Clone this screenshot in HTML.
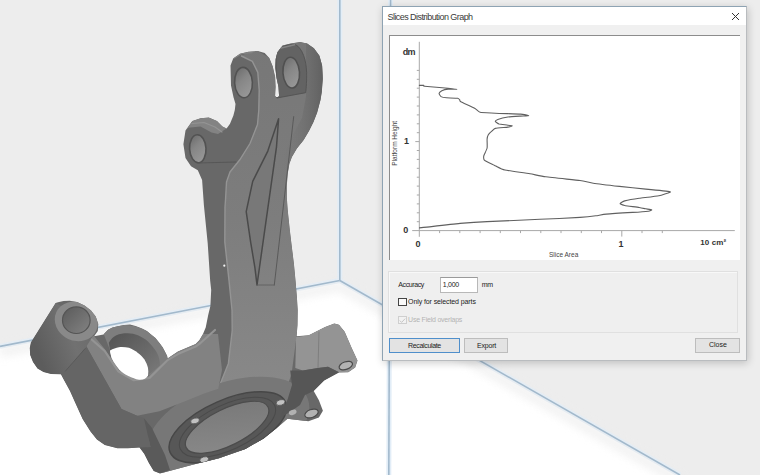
<!DOCTYPE html>
<html><head><meta charset="utf-8">
<style>
html,body{margin:0;padding:0;}
body{width:760px;height:475px;overflow:hidden;position:relative;background:#ededed;font-family:"Liberation Sans",sans-serif;}
#scene,#graph{position:absolute;left:0;top:0;}
.dlg{position:absolute;left:382px;top:6px;width:363px;height:353px;background:#f0f0f0;border:1px solid #8ea3b3;border-right-color:#b9bcbf;border-bottom-color:#b9bcbf;box-shadow:1px 2px 8px rgba(0,0,0,0.2);}
.title{position:absolute;left:0;top:0;width:363px;height:18px;background:#fff;}
.xbtn{position:absolute;left:347px;top:4px;width:11px;height:11px;}
.panel{position:absolute;left:6px;top:28px;width:350px;height:224px;background:#fff;border-top:1px solid #8c8c8c;border-left:1px solid #8c8c8c;}
.grp{position:absolute;left:5px;top:263.5px;width:348px;height:60.5px;border:1px solid #e0e0e0;background:#efefef;box-shadow:inset 1px 1px 0 #f8f8f8;}
.t{position:absolute;font-size:7px;color:#222;white-space:nowrap;line-height:1;}
.b{font-weight:bold;color:#333;}
.btn{position:absolute;top:331px;height:13px;background:#e3e3e3;border:1px solid #bdbdbd;}
</style></head><body>
<svg id="scene" width="760" height="475" viewBox="0 0 760 475">
  <defs><filter id="blur4" x="-10%" y="-50%" width="120%" height="200%"><feGaussianBlur stdDeviation="4"/></filter><linearGradient id="fl1" x1="0" y1="0" x2="0" y2="1"><stop offset="0" stop-color="#eeeeee"/><stop offset="1" stop-color="#ffffff"/></linearGradient></defs>
  <polygon points="0,346.4 339.8,280.5 680,475 0,475" fill="#ffffff"/>
  <g fill="none" stroke-linecap="butt">
    <g stroke="#e2edf7" stroke-width="5">
      <line x1="339.8" y1="0" x2="339.8" y2="280.5"/>
      <line x1="0" y1="346.4" x2="339.8" y2="280.5"/>
      <line x1="339.8" y1="280.5" x2="680" y2="475"/>
      <line x1="390.6" y1="0" x2="388.8" y2="475"/>
    </g>
    <g stroke="#ececec" stroke-width="10" opacity="0.7" filter="url(#blur4)">
      <line x1="0" y1="352" x2="339.8" y2="286"/>
      <line x1="339.8" y1="286" x2="680" y2="481"/>
    </g>
    <g stroke="#a2b9cc" stroke-width="1.6">
      <line x1="339.8" y1="0" x2="339.8" y2="280.5"/>
      <line x1="0" y1="346.4" x2="339.8" y2="280.5"/>
      <line x1="339.8" y1="280.5" x2="680" y2="475"/>
      <line x1="390.6" y1="0" x2="388.8" y2="475"/>
    </g>
  </g>
  <g id="model"><defs><clipPath id="cp"><polygon points="230.5,65.4 233.2,58.5 240.0,53.7 248.3,51.7 257.8,51.0 264.7,53.0 269.3,58.1 272.7,66.2 275.1,76.7 275.6,87.1 275.1,96.0 276.8,97.5 279.1,96.3 278.5,87.1 276.8,79.0 275.1,67.4 275.6,59.3 277.4,52.3 282.5,45.5 290.7,43.5 300.2,42.1 307.1,43.5 313.9,48.3 319.4,55.8 322.1,65.4 322.8,79.0 321.8,92.0 320.5,100.0 317.2,112.6 313.5,122.0 309.0,131.0 303.7,140.1 296.9,148.5 291.9,156.9 289.4,163.7 287.7,173.8 286.8,185.6 286.8,197.3 287.7,210.0 289.8,230.0 291.8,246.8 293.9,263.7 295.5,280.5 296.9,297.3 297.7,310.0 297.5,325.0 296.6,336.3 308.8,335.2 325.1,327.1 334.3,323.6 339.0,324.7 344.7,331.7 351.7,347.9 357.5,360.6 355.2,367.6 348.2,372.2 339.0,372.6 324.2,380.5 313.7,391.0 318.9,400.3 322.9,410.8 318.9,417.4 308.4,421.3 297.9,420.0 287.4,418.7 276.8,427.9 263.7,438.4 245.3,448.9 218.9,458.2 192.6,464.7 160.0,473.5 153.7,471.1 149.0,463.2 144.2,453.7 139.5,447.4 128.0,448.3 117.4,448.2 104.8,445.0 96.9,439.5 90.5,431.6 82.6,419.0 74.0,400.0 70.0,391.0 63.3,378.8 61.0,374.3 51.1,374.1 43.5,372.0 37.5,368.6 33.0,362.0 30.2,355.0 29.8,348.0 30.9,342.4 55.6,303.0 58.0,302.2 63.5,301.0 69.7,300.8 77.0,302.0 84.5,305.5 91.0,310.5 95.7,316.5 98.3,324.0 97.8,331.0 94.1,336.3 103.5,334.5 108.0,329.8 112.5,327.5 117.8,326.2 124.0,325.0 130.0,324.5 135.5,326.0 142.0,328.5 147.0,331.0 150.5,333.9 155.5,338.0 159.3,342.8 162.5,347.0 165.7,352.9 167.2,356.0 167.6,358.6 177.9,351.6 195.6,344.0 199.3,340.3 203.0,334.0 205.7,327.6 208.2,315.0 210.4,306.0 211.2,290.0 210.2,281.1 207.7,243.2 203.9,205.3 202.1,180.0 197.8,170.3 191.0,166.2 185.5,158.0 183.4,144.2 185.5,130.5 192.3,121.0 200.5,118.2 208.8,117.5 217.0,121.0 222.5,126.4 226.6,128.5 230.0,123.7 233.4,115.5 234.8,110.0 235.5,104.0 233.5,97.3 231.0,85.5"/></clipPath><linearGradient id="gcyl" x1="0" y1="0.4" x2="1" y2="0"><stop offset="0" stop-color="#5c5c5c"/><stop offset="0.5" stop-color="#717171"/><stop offset="1" stop-color="#686868"/></linearGradient><linearGradient id="ghole" x1="0" y1="0" x2="0.5" y2="1"><stop offset="0" stop-color="#686868"/><stop offset="0.5" stop-color="#868686"/><stop offset="1" stop-color="#969696"/></linearGradient><linearGradient id="gfront" x1="0" y1="0" x2="0" y2="1"><stop offset="0" stop-color="#777777"/><stop offset="0.5" stop-color="#7d7d7d"/><stop offset="1" stop-color="#898989"/></linearGradient><linearGradient id="gright" x1="0" y1="0" x2="1" y2="0"><stop offset="0" stop-color="#7a7a7a" stop-opacity="0"/><stop offset="1" stop-color="#5e5e5e" stop-opacity="1"/></linearGradient><linearGradient id="gbore" x1="1" y1="0" x2="0" y2="1"><stop offset="0" stop-color="#777777"/><stop offset="1" stop-color="#8a8a8a"/></linearGradient><linearGradient id="gring" x1="0" y1="0" x2="1" y2="1"><stop offset="0" stop-color="#535353"/><stop offset="1" stop-color="#7a7a7a"/></linearGradient><linearGradient id="ghole2" x1="0" y1="0" x2="1" y2="1"><stop offset="0" stop-color="#5a5a5a"/><stop offset="1" stop-color="#838383"/></linearGradient></defs>
<polygon points="230.5,65.4 233.2,58.5 240.0,53.7 248.3,51.7 257.8,51.0 264.7,53.0 269.3,58.1 272.7,66.2 275.1,76.7 275.6,87.1 275.1,96.0 276.8,97.5 279.1,96.3 278.5,87.1 276.8,79.0 275.1,67.4 275.6,59.3 277.4,52.3 282.5,45.5 290.7,43.5 300.2,42.1 307.1,43.5 313.9,48.3 319.4,55.8 322.1,65.4 322.8,79.0 321.8,92.0 320.5,100.0 317.2,112.6 313.5,122.0 309.0,131.0 303.7,140.1 296.9,148.5 291.9,156.9 289.4,163.7 287.7,173.8 286.8,185.6 286.8,197.3 287.7,210.0 289.8,230.0 291.8,246.8 293.9,263.7 295.5,280.5 296.9,297.3 297.7,310.0 297.5,325.0 296.6,336.3 308.8,335.2 325.1,327.1 334.3,323.6 339.0,324.7 344.7,331.7 351.7,347.9 357.5,360.6 355.2,367.6 348.2,372.2 339.0,372.6 324.2,380.5 313.7,391.0 318.9,400.3 322.9,410.8 318.9,417.4 308.4,421.3 297.9,420.0 287.4,418.7 276.8,427.9 263.7,438.4 245.3,448.9 218.9,458.2 192.6,464.7 160.0,473.5 153.7,471.1 149.0,463.2 144.2,453.7 139.5,447.4 128.0,448.3 117.4,448.2 104.8,445.0 96.9,439.5 90.5,431.6 82.6,419.0 74.0,400.0 70.0,391.0 63.3,378.8 61.0,374.3 51.1,374.1 43.5,372.0 37.5,368.6 33.0,362.0 30.2,355.0 29.8,348.0 30.9,342.4 55.6,303.0 58.0,302.2 63.5,301.0 69.7,300.8 77.0,302.0 84.5,305.5 91.0,310.5 95.7,316.5 98.3,324.0 97.8,331.0 94.1,336.3 103.5,334.5 108.0,329.8 112.5,327.5 117.8,326.2 124.0,325.0 130.0,324.5 135.5,326.0 142.0,328.5 147.0,331.0 150.5,333.9 155.5,338.0 159.3,342.8 162.5,347.0 165.7,352.9 167.2,356.0 167.6,358.6 177.9,351.6 195.6,344.0 199.3,340.3 203.0,334.0 205.7,327.6 208.2,315.0 210.4,306.0 211.2,290.0 210.2,281.1 207.7,243.2 203.9,205.3 202.1,180.0 197.8,170.3 191.0,166.2 185.5,158.0 183.4,144.2 185.5,130.5 192.3,121.0 200.5,118.2 208.8,117.5 217.0,121.0 222.5,126.4 226.6,128.5 230.0,123.7 233.4,115.5 234.8,110.0 235.5,104.0 233.5,97.3 231.0,85.5" fill="#686868" />
<polygon points="110.1,350.4 118.9,347.2 129.0,347.8 137.9,352.9 144.2,359.2 148.0,368.0 148.0,375.5 139.0,379.8 119.7,370.0 111.8,358.2" fill="#ffffff" />
<g clip-path="url(#cp)">
<polygon points="241.4,56.0 252.4,61.4 257.8,72.4 259.2,90.0 258.8,110.0 257.5,124.5 250.0,143.5 239.8,159.8 230.0,172.0 226.5,182.0 225.5,200.0 225.0,207.0 224.8,241.8 229.0,280.7 232.0,310.0 232.2,330.6 228.4,363.4 218.3,388.7 284.0,396.3 291.6,373.5 296.6,336.0 297.5,325.0 297.7,310.0 296.9,297.3 295.5,280.5 293.9,263.7 291.8,246.8 289.8,230.0 287.7,210.0 286.8,197.3 286.8,185.6 287.7,173.8 289.4,163.7 291.9,156.9 296.9,148.5 303.7,140.1 309.0,131.0 313.5,122.0 317.2,112.6 320.5,100.0 320.5,100.0 321.8,92.0 322.8,79.0 322.1,65.4 319.4,55.8 313.9,48.3 307.1,43.5 300.2,42.1 290.7,43.5 282.5,45.5 277.4,52.3 275.6,59.3 275.1,67.4 276.8,79.0 278.5,87.1 279.1,96.3 276.8,97.5 275.1,96.0 275.6,87.1 275.1,76.7 272.7,66.2 269.3,58.1 257.8,51.0 248.3,51.7" fill="url(#gfront)" />
<polygon points="306.0,40.0 325.0,40.0 322.8,79.0 321.8,92.0 320.5,100.0 317.2,112.6 313.5,122.0 309.0,131.0 303.7,140.1 296.9,148.5 291.9,156.9 289.4,163.7 287.7,173.8 280.0,165.0 290.0,140.0 302.0,118.0 306.0,96.0" fill="url(#gright)" />
<path d="M275.8,53 C278,47.5 287,44 295.5,44.6 C302.5,48.5 306.2,60 306.6,72.2 C306.8,80 306.3,88 305.6,92.7 L276.8,98 Z" fill="#636363" stroke="#555555" stroke-width="1"/>
<polyline points="279.0,48.5 294.6,44.8" fill="none" stroke="#838383" stroke-width="1.5" stroke-linejoin="round" stroke-linecap="round" />
<ellipse cx="291.2" cy="72.6" rx="8.3" ry="15.4" fill="url(#ghole)" transform="rotate(-4 291.2 72.6)" stroke="#505050" stroke-width="1.6"/>
<ellipse cx="243.5" cy="82.6" rx="8.9" ry="15.2" fill="url(#ghole)" transform="rotate(-3 243.5 82.6)" stroke="#525252" stroke-width="1.6"/>
<polyline points="234.0,58.0 241.4,53.5 252.0,52.5" fill="none" stroke="#838383" stroke-width="1.5" stroke-linejoin="round" stroke-linecap="round" />
<polyline points="241.4,56.0 252.4,61.4 257.8,72.4 259.2,90.0 258.8,110.0 257.5,124.5 250.0,143.5 239.8,159.8 230.0,172.0 226.5,182.0 225.5,200.0 225.0,207.0 224.8,241.8 229.0,280.7 232.0,310.0 232.2,330.6 228.4,363.4 218.3,388.7" fill="none" stroke="#949494" stroke-width="1.4" stroke-linejoin="round" stroke-linecap="round" />
<polygon points="185.5,130.5 192.3,121.0 200.5,118.2 208.8,117.5 217.0,121.0 222.5,126.4 226.6,128.5 218.0,134.0 211.5,132.6 200.5,126.4 188.2,127.8" fill="#838383" />
<polyline points="192.0,123.5 204.0,122.5 215.0,127.0 222.0,132.0" fill="none" stroke="#949494" stroke-width="1.2" stroke-linejoin="round" stroke-linecap="round" />
<ellipse cx="197.8" cy="148.7" rx="8.2" ry="14" fill="url(#ghole)" transform="rotate(-3 197.8 148.7)" stroke="#525252" stroke-width="1.6"/>
<polyline points="198.0,163.0 236.0,162.0" fill="none" stroke="#575757" stroke-width="1" stroke-linejoin="round" stroke-linecap="round" />
<polyline points="293.7,116.6 274.3,285.0" fill="none" stroke="#5a5a5a" stroke-width="1" stroke-linejoin="round" stroke-linecap="round" />
<polygon points="278.6,118.7 267.8,151.1 252.7,181.4 246.2,211.6 250.6,241.8 254.9,267.7 257.0,285.0 276.5,146.8" fill="#787878" stroke="#4a4a4a" stroke-width="1.5" stroke-linejoin="round"/>
<polyline points="257.0,285.0 274.3,285.0" fill="none" stroke="#5c5c5c" stroke-width="0.8" stroke-linejoin="round" stroke-linecap="round" />
<ellipse cx="228" cy="428" rx="85" ry="45" fill="#777777" transform="rotate(-20 228 428)" />
<polygon points="84.2,342.6 89.0,336.0 94.0,336.0 104.7,349.0 118.2,369.2 133.8,378.2 149.5,375.9 167.1,357.9 177.9,351.6 195.6,344.0 199.3,340.3 203.0,334.0 218.0,334.0 222.0,370.0 218.3,388.7 204.2,393.4 181.9,402.4 159.5,411.3 137.1,415.8 121.5,409.0" fill="#828282" />
<polyline points="90.0,338.0 104.7,351.0 118.2,371.2 133.8,380.2 149.5,377.9 167.1,360.4 177.9,354.1 195.6,346.5 200.5,343.0 215.0,330.0" fill="none" stroke="#949494" stroke-width="2.2" stroke-linejoin="round" stroke-linecap="round" />
<polygon points="59.4,372.2 84.2,342.6 121.5,409.0 137.1,415.8 143.8,418.0 150.5,447.1 139.5,447.4 128.0,448.3 117.4,448.2 104.8,445.0 96.9,439.5 90.5,431.6 82.6,419.0 74.0,400.0 70.0,391.0 63.3,378.8" fill="#656565" />
<polygon points="143.8,418.0 152.0,428.0 165.0,455.0 170.0,470.0 160.0,473.5 153.7,471.1 149.0,463.2 144.2,453.7 139.5,447.4 150.5,447.1" fill="#5a5a5a" />
<polygon points="30.9,342.4 55.6,303.0 98.3,327.2 85.2,348.5 65.3,371.2 61.0,374.3 51.1,374.1 43.5,372.0 37.5,368.6 33.0,362.0 30.2,355.0 29.8,348.0" fill="url(#gcyl)" />
<polyline points="85.2,348.5 65.3,371.2" fill="none" stroke="#5a5a5a" stroke-width="1" stroke-linejoin="round" stroke-linecap="round" />
<ellipse cx="76.3" cy="321.4" rx="22" ry="19.3" fill="#898989" transform="rotate(25 76.3 321.4)" />
<ellipse cx="76.3" cy="320.2" rx="13.8" ry="13.3" fill="url(#ghole2)" transform="rotate(0 76.3 320.2)" stroke="#555555" stroke-width="1.2"/>
<path d="M103.5,333.5 C107,329.5 110,327.8 112.6,327 C117,325.8 121,325.1 125.3,325.1 C130,325.3 134,326 137.9,327 C143,329 147,331 150.5,333.9 C154,336.5 157,339.5 159.3,342.8 C162,346 164.5,349.5 165.7,352.9 C166.8,355 167.4,357 167.6,358.6 L149.5,375.9 L147.9,374.9 C148.5,365 144,356 136.3,351.7 C130,348 120,347 110.1,350.4 Z" fill="#7e7e7e"/>
<path d="M108.8,342.8 C111,339 113.5,336.5 116.4,335.2 C120,333.8 124,333.2 127.8,333.3 C131.5,333.5 135,334 137.9,335.2 C142,337 145.5,339 148,341.5 C151,344.5 153.5,347.5 155.6,350.4 C157.5,353.5 158.8,356.5 159.3,359.2 C159.8,361.5 160,363.5 160,365.5 L152.6,371.4 L148,375 C148.5,365 144,356 137.9,352.9 C132,349 124,347 110.1,350.4 Z" fill="url(#gring)"/>
<path d="M110.1,350.4 C113,348.8 116,347.6 118.9,347.2 C122.5,346.9 126,347.2 129,347.8 C132,349 135,350.8 137.9,352.9 C140.5,354.8 142.5,357 144.2,359.2 C146,362 147.3,365 148,368 C148.4,370.5 148.4,373 148,375.5 C146.5,378.5 143,380.2 139,379.8 C132,378.5 124,374.5 119.7,370 C116,366 113.5,362 111.8,358.2 C110.8,355.5 110.2,353 110.1,350.4 Z" fill="#ffffff"/>
<ellipse cx="227.9" cy="427.3" rx="63" ry="27.5" fill="#575757" transform="rotate(-23.5 227.9 427.3)" stroke="#474747" stroke-width="1.5"/>
<ellipse cx="227.5" cy="427.3" rx="52" ry="22.5" fill="none" transform="rotate(-25 227.5 427.3)" stroke="#4a4a4a" stroke-width="1"/>
<ellipse cx="227.1" cy="427.3" rx="45.7" ry="18.2" fill="url(#gbore)" transform="rotate(-26.4 227.1 427.3)" stroke="#4c4c4c" stroke-width="1.2"/>
<ellipse cx="195" cy="420.9" rx="4.5" ry="2.8" fill="#c2c2c2" transform="rotate(-15 195 420.9)" stroke="#555555" stroke-width="0.8"/>
<ellipse cx="280.6" cy="402.5" rx="4.5" ry="2.8" fill="#c2c2c2" transform="rotate(-15 280.6 402.5)" stroke="#555555" stroke-width="0.8"/>
<ellipse cx="204.2" cy="459.6" rx="4.5" ry="2.8" fill="#c2c2c2" transform="rotate(-15 204.2 459.6)" stroke="#555555" stroke-width="0.8"/>
<polygon points="296.1,337.0 308.8,335.2 325.1,327.1 334.3,323.6 339.0,324.7 344.7,331.7 351.7,347.9 357.5,360.6 355.2,367.6 348.2,372.2 339.0,372.2 328.0,366.8 318.0,368.1 302.8,370.6 295.3,368.1" fill="#949494" />
<polyline points="319.0,332.0 318.0,368.0" fill="none" stroke="#7e7e7e" stroke-width="1" stroke-linejoin="round" stroke-linecap="round" />
<polygon points="290.2,370.6 302.8,370.6 318.0,368.1 328.0,366.8 339.0,372.2 324.2,380.5 313.7,391.0 305.0,395.0 300.0,405.0 290.0,412.0 280.0,418.0 287.4,400.0 292.0,385.0" fill="#565656" />
<ellipse cx="345.8" cy="365.6" rx="7" ry="3.8" fill="#b3b3b3" transform="rotate(-20 345.8 365.6)" stroke="#4a4a4a" stroke-width="1.2"/>
<ellipse cx="311.5" cy="413.5" rx="7" ry="4" fill="#b2b2b2" transform="rotate(-20 311.5 413.5)" stroke="#4a4a4a" stroke-width="1.2"/>
<ellipse cx="292.7" cy="412.3" rx="4" ry="2.5" fill="#b2b2b2" transform="rotate(-20 292.7 412.3)" />
<circle cx="224.3" cy="265.7" r="1.1" fill="#f4f4f4"/>
</g></g><!--endmodel-->
</svg>
<div class="dlg">
  <div class="title">
    <svg class="xbtn" viewBox="0 0 11 11"><path d="M2 2L9 9M9 2L2 9" stroke="#333" stroke-width="1"/></svg>
  </div>
  <div class="panel"></div>
  <div class="grp"></div>
  <div class="btn" style="left:6px;width:69px;border-color:#4f8fcb;"></div>
  <div class="btn" style="left:81px;width:42px;"></div>
  <div class="btn" style="left:312px;width:43px;"></div>
</div>
<svg id="graph" width="760" height="475" viewBox="0 0 760 475">
  <g stroke="#a8a8a8" stroke-width="1" fill="none">
    <line x1="419.3" y1="41.8" x2="419.3" y2="236.8"/>
    <line x1="412.2" y1="230.6" x2="734.8" y2="230.6"/>
    <line x1="416.8" y1="221.7" x2="419.3" y2="221.7"/><line x1="416.8" y1="212.8" x2="419.3" y2="212.8"/><line x1="416.8" y1="203.9" x2="419.3" y2="203.9"/><line x1="416.8" y1="195.0" x2="419.3" y2="195.0"/><line x1="416.8" y1="186.1" x2="419.3" y2="186.1"/><line x1="416.8" y1="177.2" x2="419.3" y2="177.2"/><line x1="416.8" y1="168.3" x2="419.3" y2="168.3"/><line x1="416.8" y1="159.4" x2="419.3" y2="159.4"/><line x1="416.8" y1="150.5" x2="419.3" y2="150.5"/><line x1="415.3" y1="141.6" x2="419.3" y2="141.6"/><line x1="416.8" y1="132.7" x2="419.3" y2="132.7"/><line x1="416.8" y1="123.8" x2="419.3" y2="123.8"/><line x1="416.8" y1="114.9" x2="419.3" y2="114.9"/><line x1="416.8" y1="106.0" x2="419.3" y2="106.0"/><line x1="416.8" y1="97.1" x2="419.3" y2="97.1"/><line x1="416.8" y1="88.2" x2="419.3" y2="88.2"/><line x1="416.8" y1="79.3" x2="419.3" y2="79.3"/><line x1="416.8" y1="70.4" x2="419.3" y2="70.4"/><line x1="439.6" y1="230.6" x2="439.6" y2="233.1"/><line x1="459.8" y1="230.6" x2="459.8" y2="233.1"/><line x1="480.1" y1="230.6" x2="480.1" y2="233.1"/><line x1="500.3" y1="230.6" x2="500.3" y2="233.1"/><line x1="520.5" y1="230.6" x2="520.5" y2="233.1"/><line x1="540.8" y1="230.6" x2="540.8" y2="233.1"/><line x1="561.0" y1="230.6" x2="561.0" y2="233.1"/><line x1="581.3" y1="230.6" x2="581.3" y2="233.1"/><line x1="601.5" y1="230.6" x2="601.5" y2="233.1"/><line x1="621.8" y1="230.6" x2="621.8" y2="236.6"/><line x1="642.0" y1="230.6" x2="642.0" y2="233.1"/><line x1="662.3" y1="230.6" x2="662.3" y2="233.1"/>
  </g>
  <path d="M418.9,85.4 C419.3,85.4 423.2,85.3 423.7,85.4 C424.2,85.5 422.5,86.0 424.5,86.2 C426.5,86.4 445.4,87.9 448.1,88.2 C450.8,88.5 456.8,89.2 456.8,89.3 C456.8,89.4 449.4,89.0 448.1,89.1 C446.9,89.2 442.6,90.3 441.8,90.7 C441.1,91.1 439.2,92.9 439.1,93.4 C439.0,93.9 440.4,96.2 441.0,96.6 C441.6,97.0 445.2,97.7 446.6,97.8 C448.0,97.9 456.5,98.1 457.6,98.3 C458.7,98.5 459.3,99.4 459.6,99.7 C459.9,100.0 459.5,101.0 460.8,101.7 C462.1,102.4 473.4,107.5 475.0,108.4 C476.6,109.3 478.4,111.9 480.1,112.3 C481.8,112.7 491.9,113.0 495.3,113.2 C498.7,113.4 517.7,113.9 520.5,114.1 C523.3,114.3 528.8,115.5 528.8,115.7 C528.8,115.9 522.2,116.0 520.5,116.1 C518.8,116.2 509.8,116.7 507.9,117.0 C506.0,117.3 498.9,119.1 497.8,119.5 C496.8,119.9 495.2,121.0 495.3,121.4 C495.4,121.8 498.1,123.7 499.1,124.0 C500.2,124.3 506.8,125.0 507.9,125.2 C509.0,125.4 512.3,125.6 512.3,125.8 C512.3,126.0 509.3,126.9 507.9,127.1 C506.5,127.3 496.6,128.1 495.3,128.4 C494.0,128.7 492.7,130.4 492.1,130.9 C491.5,131.4 488.7,134.0 488.3,134.7 C487.9,135.4 487.2,138.0 487.1,139.1 C487.0,140.2 487.4,146.6 487.1,148.0 C486.8,149.4 484.2,154.6 483.9,155.5 C483.6,156.4 483.8,158.9 483.9,159.3 C484.0,159.7 484.5,160.3 485.2,160.7 C485.9,161.1 491.8,164.0 492.7,164.4 C493.6,164.8 495.0,165.6 496.0,166.1 C497.0,166.6 502.1,169.4 504.9,170.0 C507.7,170.6 526.6,173.2 530.0,173.8 C533.4,174.4 541.6,176.2 545.8,176.8 C550.0,177.4 576.0,180.0 580.0,180.5 C584.0,181.0 589.9,182.7 593.2,183.2 C596.5,183.7 615.1,185.9 619.5,186.4 C623.9,186.9 641.6,188.7 645.8,189.1 C650.0,189.5 668.5,191.3 670.1,191.7 C671.7,192.1 666.4,193.4 665.5,193.7 C664.6,194.0 661.1,195.3 658.9,195.7 C656.7,196.1 642.1,197.9 639.2,198.3 C636.4,198.7 626.3,200.5 624.7,200.9 C623.1,201.3 620.1,203.2 620.1,203.6 C620.1,204.0 623.1,205.2 624.7,205.5 C626.3,205.8 637.4,207.2 639.2,207.5 C641.0,207.8 644.8,208.6 645.8,208.8 C646.8,209.0 651.5,209.7 651.7,209.9 C651.9,210.1 650.0,211.0 648.4,211.2 C646.8,211.4 636.1,212.2 632.6,212.4 C629.1,212.6 609.4,213.8 606.3,214.1 C603.2,214.4 598.0,215.5 595.8,215.8 C593.6,216.1 584.6,217.1 580.0,217.4 C575.4,217.7 547.8,219.0 540.0,219.3 C532.2,219.7 493.7,221.3 487.0,221.6 C480.3,221.9 464.7,223.0 460.1,223.4 C455.5,223.8 434.9,226.2 431.5,226.6 C428.1,227.0 420.0,227.8 419.0,227.9" fill="none" stroke="#606060" stroke-width="1.1" stroke-linejoin="round"/>
</svg>
<div style="position:absolute;left:439.5px;top:277px;width:36px;height:14px;background:#fff;border:1px solid #b8b8b8;border-top-color:#9a9a9a;"></div>
<div style="position:absolute;left:398px;top:297.5px;width:6.5px;height:6.5px;background:#fafafa;border:1px solid #444;"></div>
<div style="position:absolute;left:398px;top:315.5px;width:6.5px;height:6.5px;background:#f2f2f2;border:1px solid #cfcfcf;"></div>
<svg style="position:absolute;left:398px;top:315.5px;" width="9" height="9" viewBox="0 0 9 9"><path d="M1.8 4.6L3.6 6.4L7.2 2.6" stroke="#c6c6c6" stroke-width="1" fill="none"/></svg>
<span class="t" id="t_title" style="left:387.5px;top:12.5px;font-size:9px;letter-spacing:-0.56px;color:#3a3a3a;">Slices Distribution Graph</span>
<span class="t b" id="t_dm" style="left:402.8px;top:48.3px;font-size:9px;letter-spacing:-0.9px;">dm</span>
<span class="t b" id="t_y1" style="left:404px;top:136.8px;font-size:9px;">1</span>
<span class="t b" id="t_y0" style="left:403.2px;top:226.2px;font-size:9px;">0</span>
<span class="t b" id="t_x0" style="left:415.5px;top:240.1px;font-size:9px;">0</span>
<span class="t b" id="t_x1" style="left:618.5px;top:240px;font-size:9px;">1</span>
<span class="t b" id="t_x10" style="left:700.3px;top:239px;font-size:8px;letter-spacing:0.1px;">10 cm²</span>
<span class="t" id="t_sa" style="left:549px;top:252px;font-size:6.5px;color:#444;">Slice Area</span>
<span class="t" id="t_ph" style="left:372px;top:140px;font-size:6.5px;color:#444;transform:rotate(-90deg);transform-origin:center;width:47px;text-align:center;">Platform Height</span>
<span class="t" id="t_acc" style="left:398.3px;top:281px;font-size:7px;letter-spacing:-0.4px;">Accuracy</span>
<span class="t" id="t_mm" style="left:481.7px;top:281px;font-size:7px;letter-spacing:-0.2px;">mm</span>
<span class="t" id="t_only" style="left:408.1px;top:298px;font-size:7px;letter-spacing:-0.1px;">Only for selected parts</span>
<span class="t" id="t_use" style="left:408.1px;top:315.5px;font-size:7px;letter-spacing:-0.22px;color:#b4b4b4;">Use Field overlaps</span>
<span class="t" id="t_rec" style="left:408.1px;top:341.5px;font-size:7px;letter-spacing:-0.35px;">Recalculate</span>
<span class="t" id="t_exp" style="left:477px;top:341.5px;font-size:7px;letter-spacing:-0.2px;">Export</span>
<span class="t" id="t_close" style="left:709px;top:341px;font-size:7px;">Close</span>
<span class="t" id="t_val" style="left:442.8px;top:281px;font-size:7px;letter-spacing:-0.3px;">1,000</span>
</body></html>
